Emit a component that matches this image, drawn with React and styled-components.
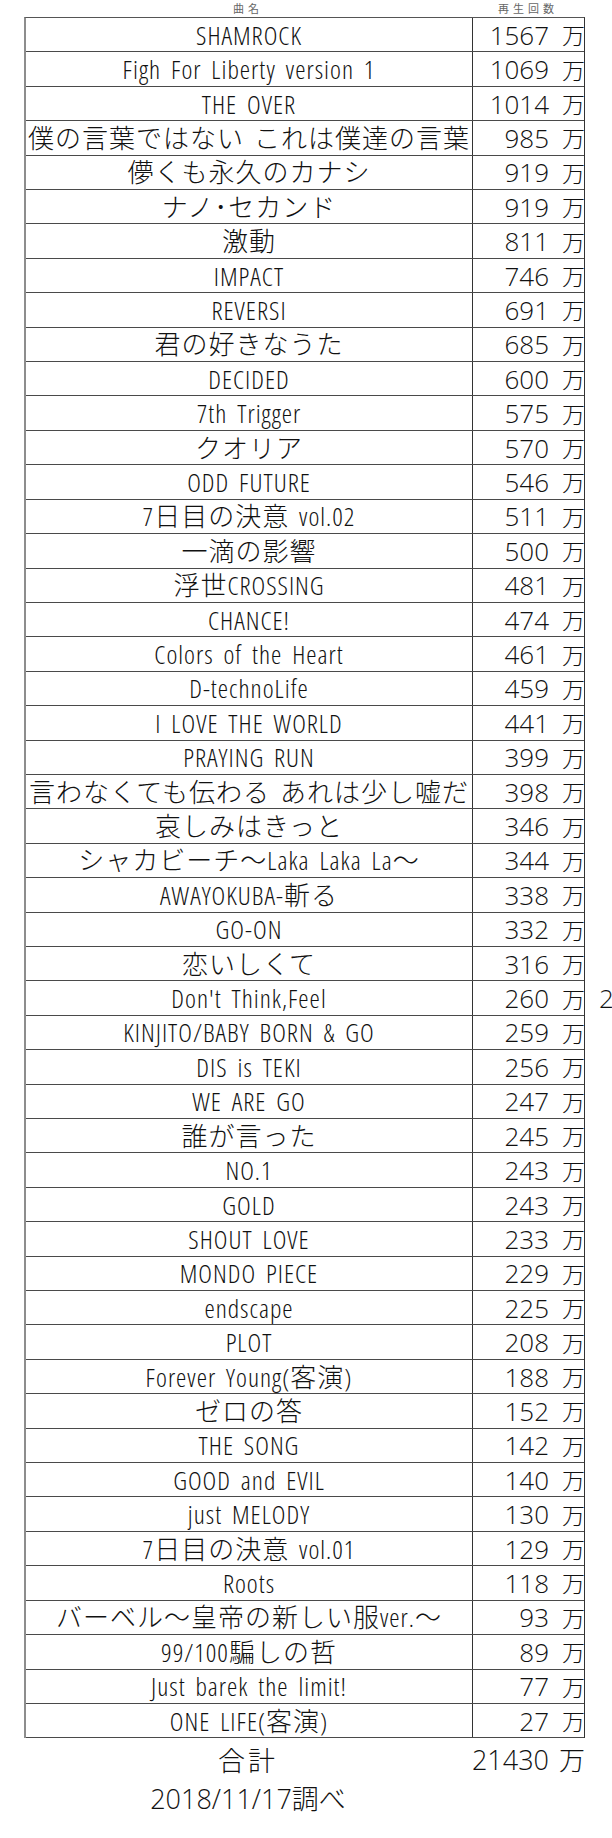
import React from 'react';
import styled, { createGlobalStyle } from 'styled-components';

const songs = [
    ['SHAMROCK', 1567],
    ['Figh For Liberty version 1', 1069],
    ['THE OVER', 1014],
    ['僕の言葉ではない これは僕達の言葉', 985],
    ['儚くも永久のカナシ', 919],
    ['ナノ･セカンド', 919],
    ['激動', 811],
    ['IMPACT', 746],
    ['REVERSI', 691],
    ['君の好きなうた', 685],
    ['DECIDED', 600],
    ['7th Trigger', 575],
    ['クオリア', 570],
    ['ODD FUTURE', 546],
    ['7日目の決意 vol.02', 511],
    ['一滴の影響', 500],
    ['浮世CROSSING', 481],
    ['CHANCE!', 474],
    ['Colors of the Heart', 461],
    ['D-technoLife', 459],
    ['I LOVE THE WORLD', 441],
    ['PRAYING RUN', 399],
    ['言わなくても伝わる あれは少し嘘だ', 398],
    ['哀しみはきっと', 346],
    ['シャカビーチ〜Laka Laka La〜', 344],
    ['AWAYOKUBA-斬る', 338],
    ['GO-ON', 332],
    ['恋いしくて', 316],
    ["Don't Think,Feel", 260, '2'],
    ['KINJITO/BABY BORN & GO', 259],
    ['DIS is TEKI', 256],
    ['WE ARE GO', 247],
    ['誰が言った', 245],
    ['NO.1', 243],
    ['GOLD', 243],
    ['SHOUT LOVE', 233],
    ['MONDO PIECE', 229],
    ['endscape', 225],
    ['PLOT', 208],
    ['Forever Young(客演)', 188],
    ['ゼロの答', 152],
    ['THE SONG', 142],
    ['GOOD and EVIL', 140],
    ['just MELODY', 130],
    ['7日目の決意 vol.01', 129],
    ['Roots', 118],
    ['バーベル〜皇帝の新しい服ver.〜', 93],
    ['99/100騙しの哲', 89],
    ['Just barek the limit!', 77],
    ['ONE LIFE(客演)', 27],
]

const GlobalStyle = createGlobalStyle`
    body {
        margin: 0;
        background: #fff;
        color: #111;
        font-family: "Open Sans", "Noto Sans CJK JP", sans-serif;
        font-weight: 300;
    }
`

const Page = styled.div`
    width: 612px;
    height: 1838px;
    overflow: hidden;
    padding-left: 24px;
    box-sizing: border-box;
`

const HeaderRow = styled.div`
    display: grid;
    grid-template-columns: 448px 112px;
    height: 17px;
    align-items: center;
`

const HeaderCell = styled.div`
    text-align: center;
    font-family: "Noto Sans CJK JP", sans-serif;
    font-weight: 400;
    font-size: 11px;
    letter-spacing: 4px;
    color: #666;
    line-height: 17px;
`

const Table = styled.div`
    width: 561px;
    border-top: 1px solid #555;
    border-left: 2px solid #8d8d8d;
    border-right: 1px solid #333;
    box-sizing: border-box;
`

const Row = styled.div`
    display: grid;
    grid-template-columns: 446px 112px 52px;
    height: 34.42px;
    box-sizing: border-box;
    border-bottom: 1px solid #4a4a4a;
    font-size: 26px;
    line-height: 1;
`

// scan uses narrow but loosely spaced latin: condensed face plus some tracking
const Title = styled.div`
    display: flex;
    align-items: center;
    justify-content: center;
    white-space: nowrap;
    font-stretch: 75%;
    letter-spacing: 1px;
    word-spacing: 4px;
`

const Count = styled.div`
    display: flex;
    align-items: center;
    justify-content: flex-end;
    padding-right: 0;
    border-left: 1px solid #333;
    white-space: nowrap;
`

const Unit = styled.span`
    margin-left: ${p => p.$gap || 13}px;
    margin-right: -1px;
    font-family: "Noto Sans CJK JP", sans-serif;
    font-size: ${p => p.$size || 23}px;
`

const Note = styled.div`
    display: flex;
    align-items: center;
    padding-left: 15px;
    white-space: nowrap;
`

const Summary = styled.div`
    display: grid;
    grid-template-columns: 448px 112px;
    grid-template-rows: 42px 36px;
    font-size: 27px;
    line-height: 1;
`

const SumLabel = styled.div`
    display: flex;
    align-items: center;
    justify-content: center;
    letter-spacing: 3px;
    font-family: "Noto Sans CJK JP", sans-serif;
    font-size: 27px;
`

const SumValue = styled.div`
    display: flex;
    align-items: center;
    justify-content: flex-end;
    white-space: nowrap;
`

const DateNote = styled.div`
    display: flex;
    align-items: center;
    justify-content: center;
    white-space: nowrap;
`

const total = songs.reduce((sum, s) => sum + s[1], 0)

const App = () => {
    return (
        <Page>
            <GlobalStyle />
            <HeaderRow>
                <HeaderCell>曲名</HeaderCell>
                <HeaderCell>再生回数</HeaderCell>
            </HeaderRow>
            <Table>
                {songs.map(([title, count, note]) => (
                    <Row key={title}>
                        <Title>{title}</Title>
                        <Count>
                            {count}
                            <Unit>万</Unit>
                        </Count>
                        <Note>{note}</Note>
                    </Row>
                ))}
            </Table>
            <Summary>
                <SumLabel>合計</SumLabel>
                <SumValue>
                    {total}
                    <Unit $size={26} $gap={10}>万</Unit>
                </SumValue>
                <DateNote>2018/11/17調べ</DateNote>
            </Summary>
        </Page>
    )
}

export default App
